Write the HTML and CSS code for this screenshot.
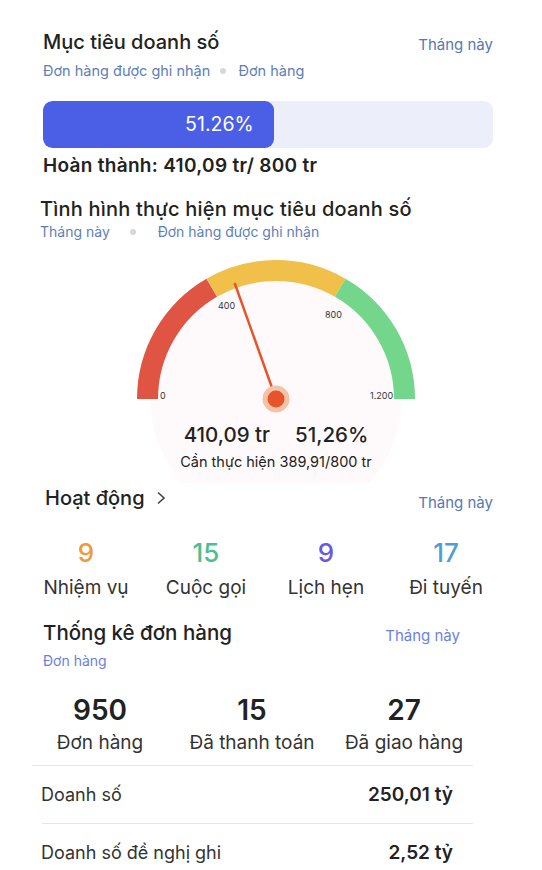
FILE: index.html
```html
<!DOCTYPE html>
<html lang="vi">
<head>
    <meta charset="UTF-8">
    <meta name="viewport" content="width=device-width, initial-scale=1.0">
    <title>Mục tiêu doanh số</title>
    <link rel="stylesheet" href="styles.css">
</head>
<body>
<div class="page">

    <!-- Mục tiêu doanh số -->
    <div class="head-row first">
        <h2 class="title">Mục tiêu doanh số</h2>
        <span class="period">Tháng này</span>
    </div>
    <div class="sub">Đơn hàng được ghi nhận <span class="dot"></span> Đơn hàng</div>

    <div class="progress">
        <div class="progress-fill" style="width: 51.26%">51.26%</div>
    </div>
    <div class="done">Hoàn thành: 410,09 tr/ 800 tr</div>

    <!-- Tình hình thực hiện -->
    <h2 class="title title-2">Tình hình thực hiện mục tiêu doanh số</h2>
    <div class="sub sub-2">Tháng này <span class="dot"></span> Đơn hàng được ghi nhận</div>

    <div class="gauge">
        <svg width="300" height="164" viewBox="0 0 300 164">
            <path d="M21.5 148 A128.5 128.5 0 0 1 85.75 36.72" fill="none" stroke="#e05444" stroke-width="21"/>
            <path d="M85.75 36.72 A128.5 128.5 0 0 1 214.25 36.72" fill="none" stroke="#f0c04b" stroke-width="21"/>
            <path d="M214.25 36.72 A128.5 128.5 0 0 1 278.5 148" fill="none" stroke="#74d68b" stroke-width="21"/>
            <text x="34" y="148" class="tick">0</text>
            <text x="92" y="58" class="tick">400</text>
            <text x="199" y="67" class="tick">800</text>
            <text x="244" y="148" class="tick">1.200</text>
            <line x1="150" y1="148" x2="109" y2="33" stroke="#e8542a" stroke-width="2.5" stroke-linecap="round"/>
            <circle cx="150" cy="148" r="13.5" fill="#f4c3a6"/>
            <circle cx="150" cy="148" r="8.5" fill="#e8542a"/>
        </svg>
        <div class="gauge-values"><span>410,09 tr</span><span>51,26%</span></div>
        <div class="gauge-need">Cần thực hiện 389,91/800 tr</div>
    </div>

    <!-- Hoạt động -->
    <div class="head-row act-head">
        <h2 class="title title-3">Hoạt động
            <svg class="chev" width="10" height="14" viewBox="0 0 10 14"><path d="M2 1.5 L8 7 L2 12.5" fill="none" stroke="#444" stroke-width="1.6"/></svg>
        </h2>
        <span class="period period-low">Tháng này</span>
    </div>
    <div class="activity">
        <div class="stat"><div class="num orange">9</div><div class="label">Nhiệm vụ</div></div>
        <div class="stat"><div class="num green">15</div><div class="label">Cuộc gọi</div></div>
        <div class="stat"><div class="num purple">9</div><div class="label">Lịch hẹn</div></div>
        <div class="stat"><div class="num blue">17</div><div class="label">Đi tuyến</div></div>
    </div>

    <!-- Thống kê đơn hàng -->
    <div class="head-row order-head">
        <h2 class="title">Thống kê đơn hàng</h2>
        <span class="period period-violet">Tháng này</span>
    </div>
    <div class="sub sub-violet">Đơn hàng</div>

    <div class="orders">
        <div class="stat"><div class="big">950</div><div class="label">Đơn hàng</div></div>
        <div class="stat"><div class="big">15</div><div class="label">Đã thanh toán</div></div>
        <div class="stat"><div class="big">27</div><div class="label">Đã giao hàng</div></div>
    </div>

    <div class="table">
        <div class="row"><span>Doanh số</span><b>250,01 tỷ</b></div>
        <div class="row"><span>Doanh số đề nghị ghi</span><b>2,52 tỷ</b></div>
    </div>

</div>
</body>
</html>
```

FILE: styles.css
```css
body {
    margin: 0;
    padding: 0;
    background: #ffffff;
    font-family: Inter, "Noto Sans", sans-serif;
    color: #222222;
}

.page {
    width: 450px;
    padding: 29px 49px 0 43px;
}

.head-row {
    display: flex;
    justify-content: space-between;
    align-items: center;
}

.title {
    margin: 0;
    font-size: 20px;
    line-height: 24px;
    font-weight: 500;
    color: #222;
}

.period {
    font-size: 15px;
    color: #5878b0;
    padding-top: 6px;
}

.sub {
    margin-top: 8px;
    font-size: 14.5px;
    line-height: 18px;
    color: #5d80b8;
}

.dot {
    display: inline-block;
    width: 6px;
    height: 6px;
    margin: 0 8px 2px 6px;
    border-radius: 50%;
    background: #d6d8de;
    vertical-align: middle;
}

.progress {
    margin-top: 21px;
    height: 47px;
    background: #eceffa;
    border-radius: 9px;
    overflow: hidden;
}

.progress-fill {
    height: 100%;
    background: #4a5ee6;
    border-radius: 9px;
    color: #fff;
    font-size: 19.5px;
    line-height: 47px;
    text-align: right;
    padding-right: 20px;
    box-sizing: border-box;
}

.done {
    margin-top: 7px;
    font-size: 19px;
    line-height: 22px;
    font-weight: 600;
    letter-spacing: 0.3px;
}

.title-2 {
    margin: 20px 0 0 -3px;
    font-size: 20px;
    letter-spacing: 0.2px;
}

.sub-2 {
    margin: 3px 0 0 -3px;
    font-size: 14px;
    line-height: 16px;
}

.sub-2 .dot {
    margin: 0 18px 2px 16px;
}

.gauge {
    margin-top: 11px;
    padding: 0 0 13px 16px;
    display: flex;
    flex-direction: column;
    align-items: center;
    background: radial-gradient(circle at 233px 148px, #fefafb 0, #fefafb 125px, transparent 126px);
}

.gauge svg {
    display: block;
}

.tick {
    font-size: 9px;
    fill: #333;
    font-family: Inter, sans-serif;
}

.gauge-values {
    margin-top: 8px;
    display: flex;
    gap: 25px;
    font-size: 20.5px;
    line-height: 24px;
    font-weight: 500;
}

.gauge-need {
    margin-top: 7px;
    font-size: 14.5px;
    line-height: 16px;
    color: #222;
}

.act-head {
    margin-left: 2px;
}

.title-3 {
    font-size: 20px;
    display: flex;
    align-items: center;
    gap: 11px;
}

.chev {
    display: block;
}

.period-low {
    padding-top: 10px;
}

.activity {
    display: grid;
    grid-template-columns: repeat(4, 120px);
    margin: 26px 0 0 -17px;
    text-align: center;
}

.num {
    font-size: 26px;
    line-height: 30px;
    font-weight: 500;
}

.orange { color: #f09a3a; }
.green { color: #4dbf8e; }
.purple { color: #6a58e2; }
.blue { color: #4b9fd8; }

.label {
    margin-top: 8px;
    font-size: 19px;
    line-height: 24px;
    color: #333;
}

.order-head {
    margin-top: 20px;
    padding-right: 33px;
}

.order-head .title {
    font-size: 20.5px;
}

.period-violet {
    color: #6a82e6;
}

.sub-violet {
    font-size: 14px;
    line-height: 16px;
    color: #6a7fe2;
}

.orders {
    display: grid;
    grid-template-columns: repeat(3, 152px);
    margin: 25px 0 0 -19px;
    text-align: center;
}

.big {
    font-size: 28px;
    line-height: 32px;
    font-weight: 600;
}

.orders .label {
    margin-top: 5px;
}

.table {
    margin: 10px 20px 0 -11px;
    border-top: 1px solid #e6e6e6;
}

.row {
    display: flex;
    justify-content: space-between;
    align-items: center;
    padding: 18px 20px 17px 9px;
    font-size: 18px;
    line-height: 22px;
    color: #333;
}

.row:first-child {
    border-bottom: 1px solid #e6e6e6;
    margin-left: 10px;
    padding-left: 0;
}

.row:first-child span {
    margin-left: -1px;
}

.row b {
    font-size: 19px;
    font-weight: 600;
    color: #222;
}
```
